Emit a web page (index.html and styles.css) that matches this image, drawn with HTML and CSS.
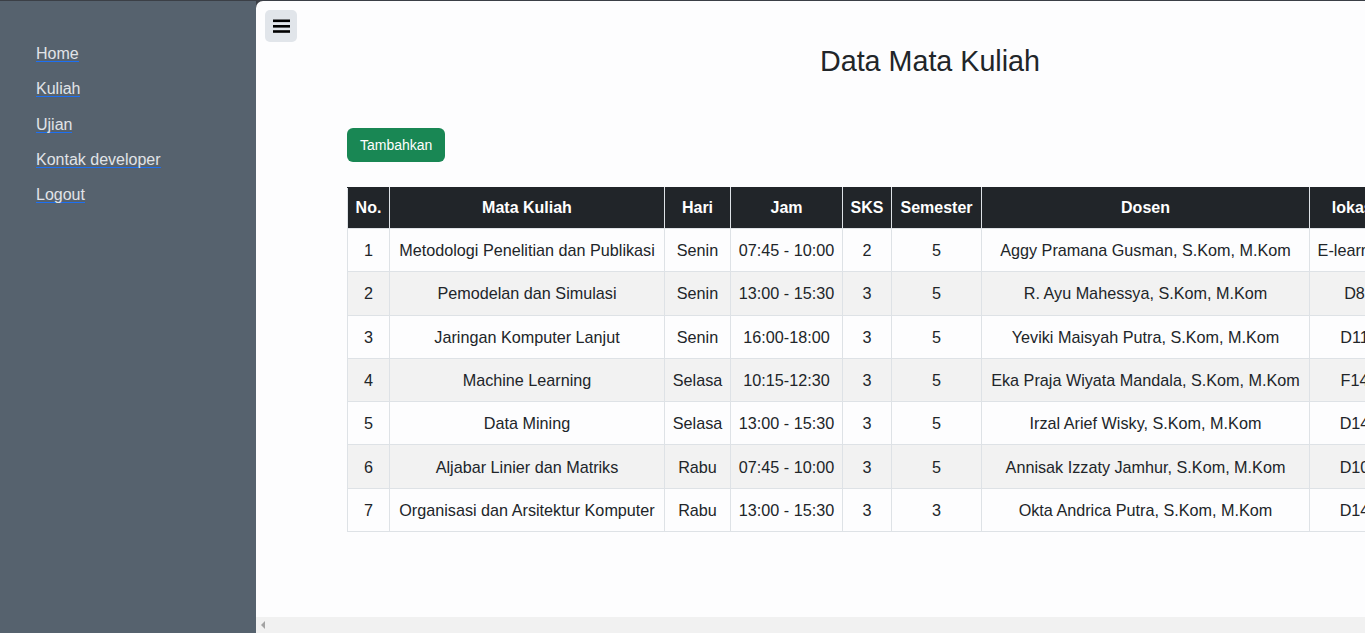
FILE: index.html
```html
<!DOCTYPE html>
<html lang="id">
<head>
<meta charset="utf-8">
<title>Data Mata Kuliah</title>
<link rel="stylesheet" href="styles.css">
</head>
<body>
<div class="app">
  <aside class="sidebar">
    <nav class="nav">
      <a href="#">Home</a>
      <a href="#">Kuliah</a>
      <a href="#">Ujian</a>
      <a href="#">Kontak developer</a>
      <a href="#">Logout</a>
    </nav>
  </aside>
  <main class="main">
    <div class="main-body">
      <button class="toggle" type="button" aria-label="Menu">
        <svg width="17" height="14" viewBox="0 0 17 14"><rect x="0" y="0.5" width="17" height="2.6" fill="#000"/><rect x="0" y="6" width="17" height="2.6" fill="#000"/><rect x="0" y="11.2" width="17" height="2.6" fill="#000"/></svg>
      </button>
      <div class="container">
        <h3 class="title">Data Mata Kuliah</h3>
        <button class="btn-add" type="button">Tambahkan</button>
        <table class="table">
          <colgroup>
            <col class="c-no"><col class="c-mk"><col class="c-hari"><col class="c-jam"><col class="c-sks"><col class="c-sem"><col class="c-dosen"><col class="c-lok">
          </colgroup>
          <thead>
            <tr><th>No.</th><th>Mata Kuliah</th><th>Hari</th><th>Jam</th><th>SKS</th><th>Semester</th><th>Dosen</th><th>lokasi</th></tr>
          </thead>
          <tbody>
            <tr><td>1</td><td>Metodologi Penelitian dan Publikasi</td><td>Senin</td><td>07:45 - 10:00</td><td>2</td><td>5</td><td>Aggy Pramana Gusman, S.Kom, M.Kom</td><td>E-learning</td></tr>
            <tr><td>2</td><td>Pemodelan dan Simulasi</td><td>Senin</td><td>13:00 - 15:30</td><td>3</td><td>5</td><td>R. Ayu Mahessya, S.Kom, M.Kom</td><td>D8</td></tr>
            <tr><td>3</td><td>Jaringan Komputer Lanjut</td><td>Senin</td><td>16:00-18:00</td><td>3</td><td>5</td><td>Yeviki Maisyah Putra, S.Kom, M.Kom</td><td>D11</td></tr>
            <tr><td>4</td><td>Machine Learning</td><td>Selasa</td><td>10:15-12:30</td><td>3</td><td>5</td><td>Eka Praja Wiyata Mandala, S.Kom, M.Kom</td><td>F14</td></tr>
            <tr><td>5</td><td>Data Mining</td><td>Selasa</td><td>13:00 - 15:30</td><td>3</td><td>5</td><td>Irzal Arief Wisky, S.Kom, M.Kom</td><td>D14</td></tr>
            <tr><td>6</td><td>Aljabar Linier dan Matriks</td><td>Rabu</td><td>07:45 - 10:00</td><td>3</td><td>5</td><td>Annisak Izzaty Jamhur, S.Kom, M.Kom</td><td>D10</td></tr>
            <tr><td>7</td><td>Organisasi dan Arsitektur Komputer</td><td>Rabu</td><td>13:00 - 15:30</td><td>3</td><td>3</td><td>Okta Andrica Putra, S.Kom, M.Kom</td><td>D14</td></tr>
          </tbody>
        </table>
      </div>
    </div>
    <div class="hscroll"><span class="arrow-left"></span></div>
  </main>
</div>
</body>
</html>
```

FILE: styles.css
```css
* { box-sizing: border-box; }

html, body {
  margin: 0;
  height: 100%;
}

body {
  background: #3b3f46;
  font-family: "Liberation Sans", Arial, sans-serif;
  font-size: 16px;
  color: #212529;
  overflow: hidden;
}

.app {
  display: flex;
  height: 100%;
  padding-top: 1px;
}

.sidebar {
  width: 256px;
  flex: 0 0 256px;
  background: #56626e;
  padding: 46px 0 0 36px;
}

.nav {
  display: flex;
  flex-direction: column;
  align-items: flex-start;
  gap: 20px;
}

.nav a {
  display: block;
  color: #e1e4e8;
  font-size: 16px;
  line-height: 14px;
  text-decoration: none;
  border-bottom: 1px solid #1d6ff2;
}

.nav a:nth-child(3) {
  margin-top: 1px;
}

.main {
  flex: 1;
  min-width: 0;
  background: #fdfdfe;
  border-top-left-radius: 7px;
  display: flex;
  flex-direction: column;
  overflow: hidden;
}

.main-body {
  flex: 1;
  min-height: 0;
  padding: 9px 0 0 9px;
  overflow: hidden;
}

.toggle {
  display: flex;
  align-items: center;
  justify-content: center;
  width: 32px;
  height: 32px;
  padding: 0;
  border: none;
  border-radius: 5px;
  background: #e1e5ea;
}

.container {
  width: 1166px;
  margin-left: 82px;
}

.title {
  margin: 3px 0 0;
  text-align: center;
  font-size: 28.7px;
  font-weight: normal;
  line-height: 33.6px;
  color: #212529;
}

.btn-add {
  display: block;
  margin-top: 49.4px;
  height: 34px;
  padding: 0 13px;
  border: none;
  border-radius: 6px;
  background: #198754;
  color: #fff;
  font-family: "Liberation Sans", Arial, sans-serif;
  font-size: 14px;
  line-height: 34px;
}

.table {
  margin-top: 25px;
  border-collapse: collapse;
  table-layout: fixed;
  width: 1052px;
  text-align: center;
}

.c-no { width: 42px; }
.c-mk { width: 275px; }
.c-hari { width: 66px; }
.c-jam { width: 112px; }
.c-sks { width: 49px; }
.c-sem { width: 90px; }
.c-dosen { width: 328px; }
.c-lok { width: 90px; }

.table th,
.table td {
  border: 1px solid #dee2e6;
  white-space: nowrap;
  overflow: hidden;
  padding: 8px 4px;
  line-height: 24px;
}

.table th {
  background: #212529;
  color: #fff;
  font-weight: bold;
  border-color: #dee2e6;
  border-top-color: #212529;
}

.table td {
  padding-top: 9.15px;
  padding-bottom: 9.15px;
  font-size: 16.2px;
  color: #212529;
}

.table tbody tr:nth-child(even) td {
  background: #f2f2f2;
}

.hscroll {
  flex: 0 0 16px;
  height: 16px;
  background: #f1f1f1;
  display: flex;
  align-items: center;
  padding-left: 5px;
}

.arrow-left {
  width: 0;
  height: 0;
  border-top: 4px solid transparent;
  border-bottom: 4px solid transparent;
  border-right: 4px solid #a3a3a3;
}
```
